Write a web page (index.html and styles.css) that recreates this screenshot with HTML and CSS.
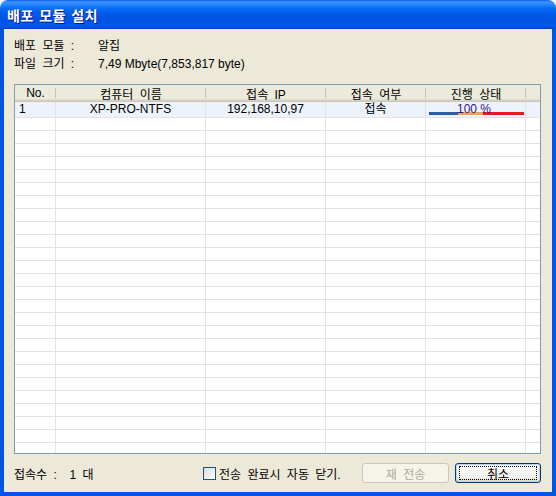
FILE: index.html
```html
<!DOCTYPE html>
<html lang="ko">
<head>
<meta charset="utf-8">
<title>배포 모듈 설치</title>
<link rel="stylesheet" href="styles.css">
</head>
<body>
<div class="window">
  <div class="titlebar"><span class="title">배포 모듈 설치</span></div>
  <div class="frame">
    <div class="info">
      <div class="info-row"><span class="label">배포 모듈 :</span><span class="value">알집</span></div>
      <div class="info-row"><span class="label">파일 크기 :</span><span class="value">7,49 Mbyte(7,853,817 byte)</span></div>
    </div>
    <div class="list">
      <div class="list-head">
        <div class="hcell c-no">No.</div>
        <div class="hcell c-name">컴퓨터 이름</div>
        <div class="hcell c-ip">접속 IP</div>
        <div class="hcell c-stat">접속 여부</div>
        <div class="hcell c-prog">진행 상태</div>
        <div class="hcell c-fill"></div>
      </div>
      <div class="list-body">
        <div class="row row-data">
          <div class="cell c-no left">1</div>
          <div class="cell c-name">XP-PRO-NTFS</div>
          <div class="cell c-ip">192,168,10,97</div>
          <div class="cell c-stat">접속</div>
          <div class="cell c-prog">
            <div class="bar"><span class="seg seg-blue"></span><span class="seg seg-orange"></span><span class="seg seg-red"></span></div>
            <span class="pct">100 %</span>
          </div>
          <div class="cell c-fill"></div>
        </div>
        <div class="row"><div class="cell c-no"></div><div class="cell c-name"></div><div class="cell c-ip"></div><div class="cell c-stat"></div><div class="cell c-prog"></div><div class="cell c-fill"></div></div>
        <div class="row"><div class="cell c-no"></div><div class="cell c-name"></div><div class="cell c-ip"></div><div class="cell c-stat"></div><div class="cell c-prog"></div><div class="cell c-fill"></div></div>
        <div class="row"><div class="cell c-no"></div><div class="cell c-name"></div><div class="cell c-ip"></div><div class="cell c-stat"></div><div class="cell c-prog"></div><div class="cell c-fill"></div></div>
        <div class="row"><div class="cell c-no"></div><div class="cell c-name"></div><div class="cell c-ip"></div><div class="cell c-stat"></div><div class="cell c-prog"></div><div class="cell c-fill"></div></div>
        <div class="row"><div class="cell c-no"></div><div class="cell c-name"></div><div class="cell c-ip"></div><div class="cell c-stat"></div><div class="cell c-prog"></div><div class="cell c-fill"></div></div>
        <div class="row"><div class="cell c-no"></div><div class="cell c-name"></div><div class="cell c-ip"></div><div class="cell c-stat"></div><div class="cell c-prog"></div><div class="cell c-fill"></div></div>
        <div class="row"><div class="cell c-no"></div><div class="cell c-name"></div><div class="cell c-ip"></div><div class="cell c-stat"></div><div class="cell c-prog"></div><div class="cell c-fill"></div></div>
        <div class="row"><div class="cell c-no"></div><div class="cell c-name"></div><div class="cell c-ip"></div><div class="cell c-stat"></div><div class="cell c-prog"></div><div class="cell c-fill"></div></div>
        <div class="row"><div class="cell c-no"></div><div class="cell c-name"></div><div class="cell c-ip"></div><div class="cell c-stat"></div><div class="cell c-prog"></div><div class="cell c-fill"></div></div>
        <div class="row"><div class="cell c-no"></div><div class="cell c-name"></div><div class="cell c-ip"></div><div class="cell c-stat"></div><div class="cell c-prog"></div><div class="cell c-fill"></div></div>
        <div class="row"><div class="cell c-no"></div><div class="cell c-name"></div><div class="cell c-ip"></div><div class="cell c-stat"></div><div class="cell c-prog"></div><div class="cell c-fill"></div></div>
        <div class="row"><div class="cell c-no"></div><div class="cell c-name"></div><div class="cell c-ip"></div><div class="cell c-stat"></div><div class="cell c-prog"></div><div class="cell c-fill"></div></div>
        <div class="row"><div class="cell c-no"></div><div class="cell c-name"></div><div class="cell c-ip"></div><div class="cell c-stat"></div><div class="cell c-prog"></div><div class="cell c-fill"></div></div>
        <div class="row"><div class="cell c-no"></div><div class="cell c-name"></div><div class="cell c-ip"></div><div class="cell c-stat"></div><div class="cell c-prog"></div><div class="cell c-fill"></div></div>
        <div class="row"><div class="cell c-no"></div><div class="cell c-name"></div><div class="cell c-ip"></div><div class="cell c-stat"></div><div class="cell c-prog"></div><div class="cell c-fill"></div></div>
        <div class="row"><div class="cell c-no"></div><div class="cell c-name"></div><div class="cell c-ip"></div><div class="cell c-stat"></div><div class="cell c-prog"></div><div class="cell c-fill"></div></div>
        <div class="row"><div class="cell c-no"></div><div class="cell c-name"></div><div class="cell c-ip"></div><div class="cell c-stat"></div><div class="cell c-prog"></div><div class="cell c-fill"></div></div>
        <div class="row"><div class="cell c-no"></div><div class="cell c-name"></div><div class="cell c-ip"></div><div class="cell c-stat"></div><div class="cell c-prog"></div><div class="cell c-fill"></div></div>
        <div class="row"><div class="cell c-no"></div><div class="cell c-name"></div><div class="cell c-ip"></div><div class="cell c-stat"></div><div class="cell c-prog"></div><div class="cell c-fill"></div></div>
        <div class="row"><div class="cell c-no"></div><div class="cell c-name"></div><div class="cell c-ip"></div><div class="cell c-stat"></div><div class="cell c-prog"></div><div class="cell c-fill"></div></div>
        <div class="row"><div class="cell c-no"></div><div class="cell c-name"></div><div class="cell c-ip"></div><div class="cell c-stat"></div><div class="cell c-prog"></div><div class="cell c-fill"></div></div>
        <div class="row"><div class="cell c-no"></div><div class="cell c-name"></div><div class="cell c-ip"></div><div class="cell c-stat"></div><div class="cell c-prog"></div><div class="cell c-fill"></div></div>
        <div class="row"><div class="cell c-no"></div><div class="cell c-name"></div><div class="cell c-ip"></div><div class="cell c-stat"></div><div class="cell c-prog"></div><div class="cell c-fill"></div></div>
        <div class="row"><div class="cell c-no"></div><div class="cell c-name"></div><div class="cell c-ip"></div><div class="cell c-stat"></div><div class="cell c-prog"></div><div class="cell c-fill"></div></div>
        <div class="row"><div class="cell c-no"></div><div class="cell c-name"></div><div class="cell c-ip"></div><div class="cell c-stat"></div><div class="cell c-prog"></div><div class="cell c-fill"></div></div>
        <div class="row"><div class="cell c-no"></div><div class="cell c-name"></div><div class="cell c-ip"></div><div class="cell c-stat"></div><div class="cell c-prog"></div><div class="cell c-fill"></div></div>
      </div>
    </div>
    <div class="footer">
      <span class="count">접속수 :  1 대</span>
      <label class="check"><span class="box"></span><span class="check-text">전송 완료시 자동 닫기.</span></label>
      <button class="btn btn-disabled" disabled>재 전송</button>
      <button class="btn btn-default"><span class="focus"></span>취소</button>
    </div>
  </div>
</div>
</body>
</html>
```
FILE: styles.css
```css
html, body {
  margin: 0;
  padding: 0;
  background: #ffffff;
}
body {
  font-family: "Liberation Sans", "Noto Sans CJK KR", sans-serif;
  font-size: 12px;
  color: #000;
}
.window {
  width: 556px;
  height: 496px;
  display: flex;
  flex-direction: column;
}
.titlebar {
  height: 29px;
  box-sizing: border-box;
  border-radius: 8px 8px 0 0;
  background: linear-gradient(to bottom,
    #0A5DEE 0px, #3D95FF 2px, #2A8BFF 4px, #0A6FF8 8px,
    #0060EE 12px, #0055E6 16px, #0054E3 20px, #0058EA 25px,
    #0050DD 28px, #003DC4 29px);
  display: flex;
  align-items: center;
  padding: 1px 0 0 7px;
}
.title {
  color: #fff;
  font-weight: bold;
  font-size: 14px;
  font-family: "Noto Sans CJK KR", sans-serif;
  text-shadow: 1px 1px 0 #0A1A8A;
  letter-spacing: 0.5px;
  word-spacing: 1px;
}
.frame {
  flex: 1;
  background: #ECE9D8;
  border: 4px solid #0055E5;
  border-top: 0;
  padding: 8px 11px 9px 10px;
  display: flex;
  flex-direction: column;
}
.info-row {
  display: flex;
  line-height: 18px;
  height: 18px;
}
.label {
  width: 84px;
  word-spacing: 3px;
}
.list {
  margin-top: 11px;
  height: 370px;
  box-sizing: border-box;
  border: 1px solid #7F9DB9;
  background: #fff;
  overflow: hidden;
  display: flex;
  flex-direction: column;
}
.list-head {
  display: flex;
  height: 17px;
  flex-shrink: 0;
  background: #EBEADB;
  box-shadow: inset 0 -1px 0 #CBC7B8, inset 0 -2px 0 #D6D2C2, inset 0 -3px 0 #E2DECD;
}
.hcell {
  position: relative;
  display: flex;
  align-items: center;
  justify-content: center;
  box-sizing: border-box;
  padding-bottom: 1px;
  word-spacing: 3px;
}
.hcell::after {
  content: "";
  position: absolute;
  right: 0;
  top: 3px;
  bottom: 4px;
  width: 1px;
  background: #C7C5B2;
}
.hcell.c-fill::after {
  display: none;
}
.c-no { width: 41px; }
.c-name { width: 150px; }
.c-ip { width: 120px; }
.c-stat { width: 100px; }
.c-prog { width: 100px; }
.c-fill { flex: 1; }
.list-body {
  flex: 1;
  overflow: hidden;
}
.row {
  display: flex;
  height: 13px;
  box-sizing: border-box;
  border-bottom: 1px solid #E3E3E3;
}
.cell {
  box-sizing: border-box;
  border-right: 1px solid #E3E3E3;
  display: flex;
  align-items: center;
  justify-content: center;
  white-space: nowrap;
}
.cell.c-fill {
  border-right: 0;
}
.row-data {
  height: 16px;
  background: #EEF3FB;
  line-height: 15px;
}
.cell.left {
  justify-content: flex-start;
  padding-left: 4px;
}
.cell.c-prog {
  position: relative;
  padding-right: 3px;
}
.bar {
  position: absolute;
  left: 3px;
  top: 10px;
  width: 95px;
  height: 3px;
  display: flex;
}
.seg { height: 3px; }
.seg-blue { width: 29px; background: #2A5CA8; }
.seg-orange { width: 25px; background: #EBA055; }
.seg-red { flex: 1; background: #E31B23; }
.pct {
  position: relative;
  color: #2E1390;
}
.footer {
  display: flex;
  align-items: center;
  margin-top: 9px;
  height: 20px;
}
.count {
  width: 189px;
  white-space: pre;
  word-spacing: 3px;
}
.check {
  flex: 1;
  display: flex;
  align-items: center;
}
.check-text {
  word-spacing: 3px;
}
.box {
  width: 13px;
  height: 13px;
  box-sizing: border-box;
  border: 1px solid #1C5180;
  background: linear-gradient(135deg, #DCDCD7, #FFFFFF);
  margin-right: 3px;
}
.btn {
  height: 20px;
  box-sizing: border-box;
  border-radius: 3px;
  font-family: "Liberation Sans", "Noto Sans CJK KR", sans-serif;
  font-size: 12px;
  padding: 0;
  position: relative;
  word-spacing: 3px;
}
.btn-disabled {
  width: 87px;
  margin-right: 6px;
  border: 1px solid #C9C7BA;
  background: #F5F4EA;
  color: #ACA899;
}
.btn-default {
  width: 86px;
  border: 1px solid #003C74;
  background: linear-gradient(to bottom, #FFFFFF, #F3F3EE 70%, #D8D4C8);
  box-shadow: inset 0 0 0 1px #B9D1F6;
  color: #000;
}
.focus {
  position: absolute;
  left: 3px;
  right: 3px;
  top: 2px;
  bottom: 2px;
  border: 1px dotted #000;
}
```
